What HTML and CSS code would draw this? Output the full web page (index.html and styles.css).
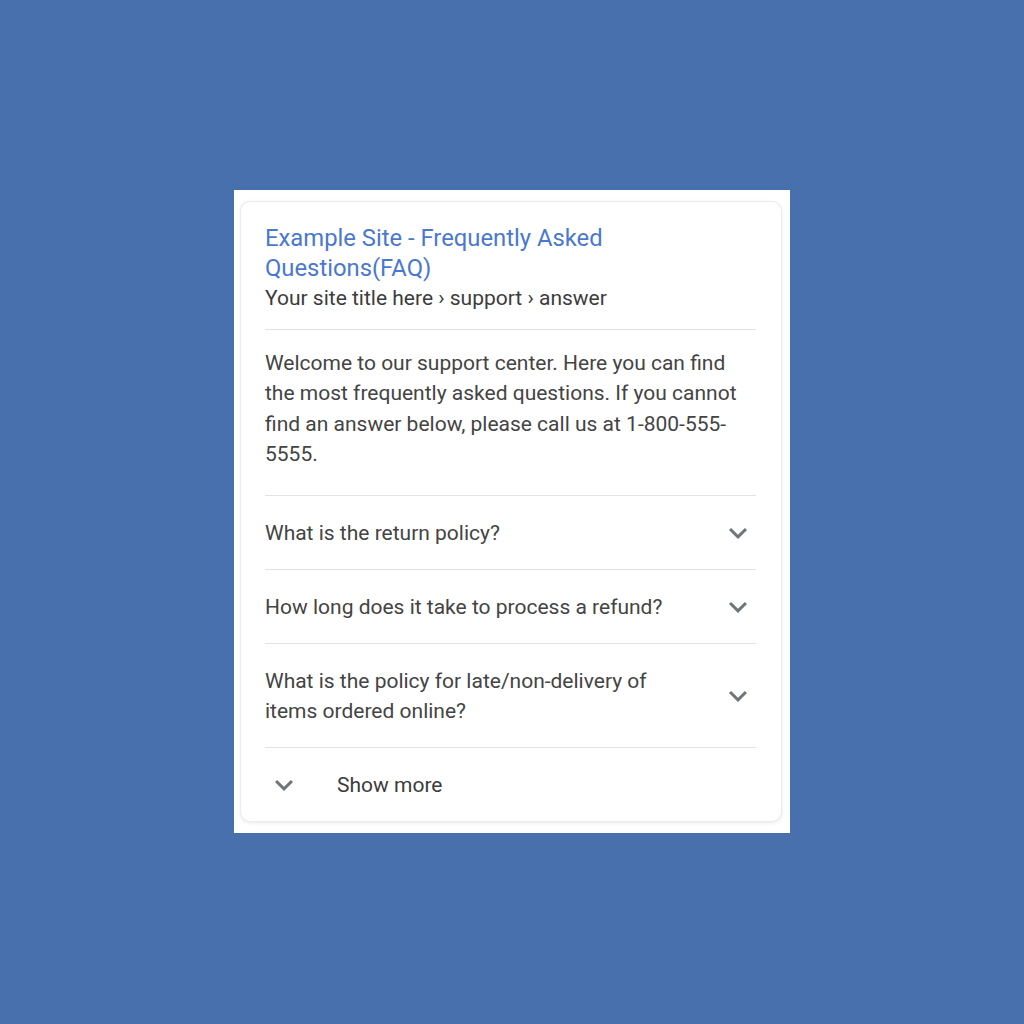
FILE: index.html
```html
<!DOCTYPE html>
<html lang="en">
<head>
<meta charset="utf-8">
<title>FAQ</title>
<link rel="stylesheet" href="styles.css">
</head>
<body>
<div class="panel">
  <div class="card">
    <div class="head">
      <a class="title" href="#">Example Site - Frequently Asked Questions(FAQ)</a>
      <div class="crumb">Your site title here › support › answer</div>
    </div>
    <p class="intro">Welcome to our support center. Here you can find the most frequently asked questions. If you cannot find an answer below, please call us at 1-800-555-5555.</p>
    <div class="row">
      <span class="q">What is the return policy?</span>
      <svg class="chev" viewBox="0 0 24 24"><path d="M16.59 8.59L12 13.17 7.41 8.59 6 10l6 6 6-6z"/></svg>
    </div>
    <div class="row">
      <span class="q">How long does it take to process a refund?</span>
      <svg class="chev" viewBox="0 0 24 24"><path d="M16.59 8.59L12 13.17 7.41 8.59 6 10l6 6 6-6z"/></svg>
    </div>
    <div class="row">
      <span class="q">What is the policy for late/non-delivery of items ordered online?</span>
      <svg class="chev" viewBox="0 0 24 24"><path d="M16.59 8.59L12 13.17 7.41 8.59 6 10l6 6 6-6z"/></svg>
    </div>
    <div class="more">
      <svg class="chev" viewBox="0 0 24 24"><path d="M16.59 8.59L12 13.17 7.41 8.59 6 10l6 6 6-6z"/></svg>
      <span class="more-label">Show more</span>
    </div>
  </div>
</div>
</body>
</html>
```
FILE: styles.css
```css
html, body {
  margin: 0;
  padding: 0;
}
body {
  background: #4870ad;
  width: 1024px;
  height: 1024px;
  font-family: Roboto, "Liberation Sans", Arial, sans-serif;
  color: #444;
}
.panel {
  box-sizing: border-box;
  margin: 190px 0 0 234px;
  width: 556px;
  height: 643px;
  background: #fff;
  padding: 12px 9px 12px 7px;
}
.card {
  box-sizing: border-box;
  height: 619px;
  border-radius: 9px;
  background: #fff;
  box-shadow: 0 0 0 1px #ececee, 0 1px 4px rgba(60, 64, 67, 0.18);
  padding: 21px 25px 0 24px;
}
.head {
  border-bottom: 1px solid #e3e3e6;
  padding-bottom: 16px;
}
.title {
  display: block;
  font-size: 23.8px;
  line-height: 30px;
  color: #4a78cf;
  text-decoration: none;
  width: 400px;
}
.crumb {
  font-size: 21px;
  line-height: 30px;
  color: #3c3c3c;
}
.intro {
  margin: 0;
  padding: 18px 0 25px;
  font-size: 21px;
  line-height: 30.4px;
  border-bottom: 1px solid #e3e3e6;
  color: #444;
}
.row {
  display: flex;
  align-items: center;
  justify-content: space-between;
  padding: 22px 0 21px;
  border-bottom: 1px solid #e3e3e6;
}
.q {
  font-size: 21px;
  line-height: 30px;
  max-width: 420px;
  color: #444;
}
.chev {
  width: 36px;
  height: 36px;
  margin: -3px 0;
  flex: none;
  fill: #70757a;
}
.more {
  display: flex;
  align-items: center;
  gap: 35px;
  padding: 22px 0 0 1px;
}
.more-label {
  font-size: 21px;
  line-height: 30px;
  color: #3c3c3c;
}
```
